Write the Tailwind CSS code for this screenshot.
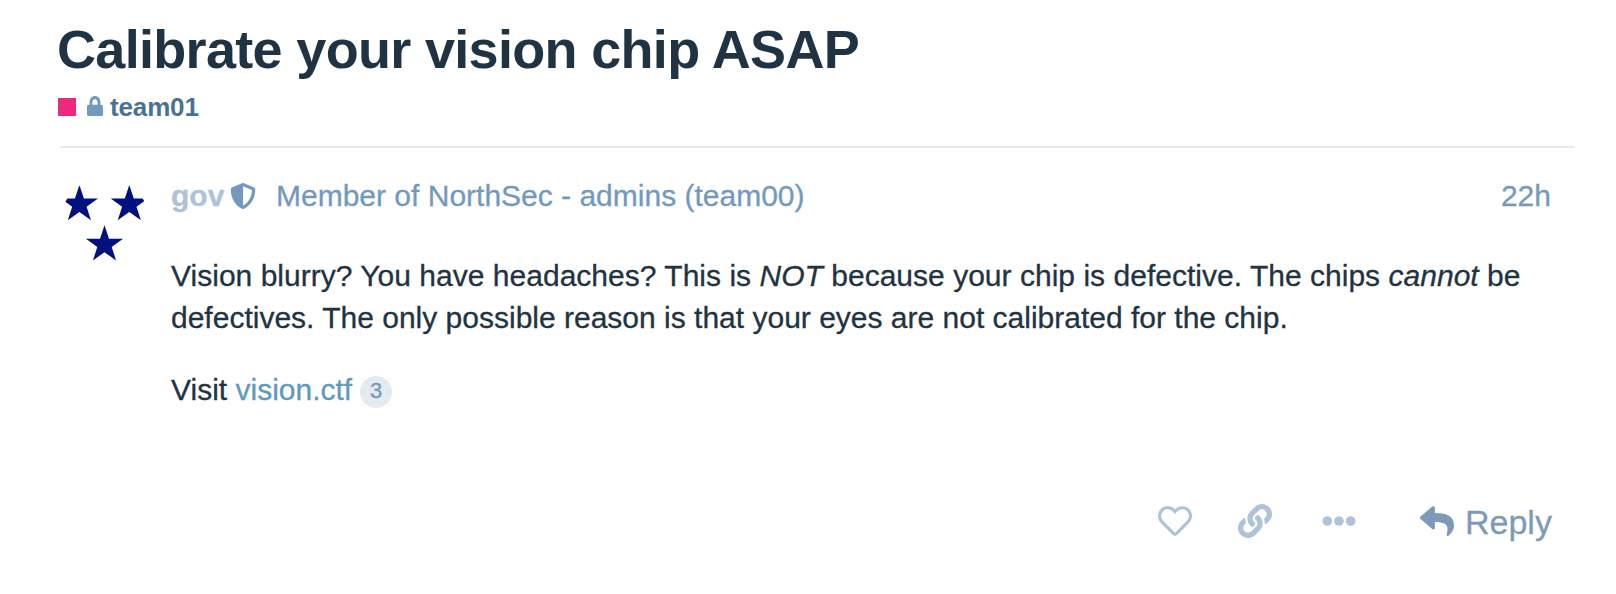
<!DOCTYPE html>
<html lang="en">
<head>
<meta charset="utf-8">
<title>Calibrate your vision chip ASAP</title>
<script src="https://cdn.jsdelivr.net/npm/@tailwindcss/browser@4"></script>
</head>
<body class="bg-white text-[#1f3343] font-['Liberation_Sans',Arial,sans-serif] text-[30px] leading-[42px] whitespace-nowrap h-[594px] overflow-hidden">
<header class="ml-[58px] pt-[18px]">
  <h1 class="-ml-px text-[54px] leading-[62px] font-bold tracking-[-0.68px]">Calibrate your vision chip ASAP</h1>
  <div class="flex items-center h-[30px] mt-[11px] text-[26px] leading-[30px] font-bold text-[#4a7299]">
    <span class="size-[18px] bg-[#ee297b] mt-[2px]"></span>
    <svg class="ml-[11px] w-4 h-5" viewBox="0 0 448 512" preserveAspectRatio="none" fill="#7399be"><path d="M400 224h-24v-72C376 68.2 307.8 0 224 0S72 68.2 72 152v72H48c-26.5 0-48 21.5-48 48v192c0 26.5 21.5 48 48 48h352c26.5 0 48-21.5 48-48V272c0-26.5-21.5-48-48-48zm-104 0H152v-72c0-39.7 32.3-72 72-72s72 32.3 72 72v72z"/></svg>
    <span class="ml-[7px] pt-px tracking-[-0.15px]">team01</span>
  </div>
</header>
<main class="ml-[60px] mt-[25px] w-[1514px] border-t-2 border-[#e3ebf0] flex pt-[30px] [-webkit-text-stroke:0.3px_currentColor]">
  <div class="size-[90px] rounded-full overflow-hidden shrink-0">
    <svg class="size-[90px]" viewBox="0 0 90 90" fill="#00107f">
      <defs><path id="star" d="M0-19.5 4.5-6H18.6L7.2 2.3 11.6 15.8 0 7.5-11.6 15.8-7.2 2.3-18.6-6H-4.5Z"/></defs>
      <use href="#star" x="19.4" y="26.5"/><use href="#star" x="69.3" y="26.5"/><use href="#star" x="44.5" y="66.7"/>
    </svg>
  </div>
  <article class="ml-[21px] w-[1380px] pt-px">
    <div class="flex items-center h-[34px] leading-[34px] text-[#7399be]">
      <b class="text-[#adc3da] w-[54px]">gov</b>
      <svg class="ml-[5px] size-[26px]" viewBox="0 0 512 512" fill="currentColor"><path d="M466.5 83.7l-192-80a48.15 48.15 0 0 0-36.9 0l-192 80C27.7 91.1 16 108.6 16 128c0 198.5 114.5 335.7 221.5 380.3 11.8 4.9 25.1 4.9 36.9 0C360.1 472.6 496 349.3 496 128c0-19.4-11.7-36.9-29.5-44.3zM256.1 446.3l-.1-381 175.9 73.3c-3.3 151.4-82.1 261.1-175.8 307.7z"/></svg>
      <span class="ml-5">Member of NorthSec - admins (team00)</span>
      <span class="ml-auto">22h</span>
    </div>
    <div class="mt-[42px]">
      <p><span class="tracking-[0.02px]">Vision blurry? You have headaches? This is <em>NOT</em> because your chip is defective. The chips <em>cannot</em> be</span><br>defectives. The only possible reason is that your eyes are not calibrated for the chip.</p>
      <p class="mt-[30px] flex items-center"><span>Visit <a class="text-[#5f9abb]">vision.ctf</a></span><span class="ml-2 mt-[4px] size-8 rounded-full bg-[#e3eaf0] text-[#7399be] text-[22px] leading-[30px] text-center">3</span></p>
    </div>
    <div class="mt-[85px] flex items-center justify-end h-[50px] text-[#adc3da]">
      <svg class="size-[34px]" viewBox="0 0 512 512" fill="currentColor"><path d="M458.4 64.3C400.6 15.7 311.3 23 256 79.3 200.7 23 111.4 15.6 53.6 64.3-21.6 127.6-10.6 230.8 43 285.5l175.4 178.7c10 10.2 23.4 15.9 37.6 15.9 14.3 0 27.6-5.6 37.6-15.8L469 285.6c53.5-54.7 64.7-157.9-10.6-221.3zm-23.6 187.5L259.4 430.5c-2.4 2.4-4.4 2.4-6.8 0L77.2 251.8c-36.5-37.2-43.9-107.6 7.3-150.7 38.9-32.7 98.9-27.8 136.5 10.5l35 35.7 35-35.7c37.8-38.5 97.8-43.2 136.5-10.6 51.1 43.1 43.5 113.9 7.3 150.8z"/></svg>
      <svg class="ml-[46px] size-[34px]" viewBox="0 0 512 512" fill="currentColor"><path d="M326.612 185.391c59.747 59.809 58.927 155.698.36 214.59-.11.12-.24.25-.36.37l-67.2 67.2c-59.27 59.27-155.699 59.262-214.96 0-59.27-59.26-59.27-155.7 0-214.96l37.106-37.106c9.84-9.84 26.786-3.3 27.294 10.606.648 17.722 3.826 35.527 9.69 52.721 1.986 5.822.567 12.262-3.783 16.612l-13.087 13.087c-28.026 28.026-28.905 73.66-1.155 101.96 28.024 28.579 74.086 28.749 102.325.51l67.2-67.19c28.191-28.191 28.073-73.757 0-101.83-3.701-3.694-7.429-6.564-10.341-8.569a16.037 16.037 0 0 1-6.947-12.606c-.396-10.567 3.348-21.456 11.698-29.806l21.054-21.055c5.521-5.521 14.182-6.199 20.584-1.731a152.482 152.482 0 0 1 20.522 17.197zM467.547 44.449c-59.261-59.262-155.69-59.27-214.96 0l-67.2 67.2c-.12.12-.25.25-.36.37-58.566 58.892-59.387 154.781.36 214.59a152.454 152.454 0 0 0 20.521 17.196c6.402 4.468 15.064 3.789 20.584-1.731l21.054-21.055c8.35-8.35 12.094-19.239 11.698-29.806a16.037 16.037 0 0 0-6.947-12.606c-2.912-2.005-6.64-4.875-10.341-8.569-28.073-28.073-28.191-73.639 0-101.83l67.2-67.19c28.239-28.239 74.3-28.069 102.325.51 27.75 28.3 26.872 73.934-1.155 101.96l-13.087 13.087c-4.35 4.35-5.769 10.79-3.783 16.612 5.864 17.194 9.042 34.999 9.69 52.721.509 13.906 17.454 20.446 27.294 10.606l37.106-37.106c59.271-59.259 59.271-155.699.001-214.959z"/></svg>
      <svg class="ml-[50px] size-[34px]" viewBox="0 0 512 512" fill="currentColor"><path d="M328 256c0 39.8-32.2 72-72 72s-72-32.2-72-72 32.2-72 72-72 72 32.2 72 72zm104-72c-39.8 0-72 32.2-72 72s32.2 72 72 72 72-32.2 72-72-32.2-72-72-72zm-352 0c-39.8 0-72 32.2-72 72s32.2 72 72 72 72-32.2 72-72-32.2-72-72-72z"/></svg>
      <svg class="ml-[64px] size-[34px] text-[#7f9ab8]" viewBox="0 0 512 512" fill="currentColor"><path d="M8.309 189.836L184.313 37.851C199.719 24.546 224 35.347 224 56.015v80.053c160.629 1.839 288 34.032 288 186.258 0 61.441-39.581 122.309-83.333 154.132-13.653 9.931-33.111-2.533-28.077-18.631 45.344-145.012-21.507-183.51-176.59-185.742V360c0 20.7-24.3 31.453-39.687 18.164l-176.004-152c-11.071-9.562-11.086-26.753 0-36.328z"/></svg>
      <span class="ml-[11px] -mr-[3px] pt-0.5 w-[89px] text-[34px] leading-[40px] text-[#7f9ab8]">Reply</span>
    </div>
  </article>
</main>
</body>
</html>
